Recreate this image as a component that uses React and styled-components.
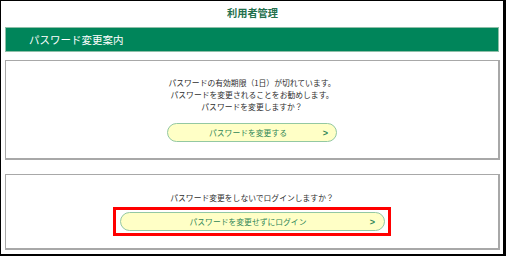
import React from "react";
import styled, { createGlobalStyle } from "styled-components";

const Global = createGlobalStyle`
  html, body { margin: 0; padding: 0; background: #fff; }
  body { font-family: "Noto Sans CJK JP", "Noto Sans", sans-serif; }
  * { box-sizing: border-box; }
`;

const Frame = styled.div`
  width: 506px;
  height: 256px;
  border-style: solid;
  border-color: #000;
  border-width: 1px 3px 2px 1px;
  padding: 0 3px 0 4px;
  display: flex;
  flex-direction: column;
  background: #fff;
`;

const Title = styled.div`
  height: 26px;
  display: flex;
  align-items: center;
  justify-content: center;
  font-size: 10.2px;
  font-weight: bold;
  color: #23704c;
  padding-bottom: 4px;
`;

const Bar = styled.div`
  height: 25px;
  margin-right: 1px;
  background: #00855a;
  border: 1px solid #8fbfa8;
  display: flex;
  align-items: center;
  padding-left: 23px;
  color: #fff;
  font-size: 10.5px;
  padding-bottom: 1px;
`;

const Box = styled.div`
  margin-top: ${(p) => p.$gap}px;
  height: ${(p) => p.$h}px;
  border-style: solid;
  border-color: #a8a8a8;
  border-width: 1px 2px 2px 1px;
  display: flex;
  flex-direction: column;
  align-items: center;
  padding-top: ${(p) => p.$pt}px;
`;

const Message = styled.p`
  margin: 0;
  font-size: 7.8px;
  line-height: 12px;
  color: #2e2e2e;
  text-align: center;
`;

const Highlight = styled.div`
  margin-top: 3px;
  border: 3px solid #f00;
  padding: 2px 3px 2px 4px;
`;

const Button = styled.div`
  margin-top: ${(p) => p.$mt || 0}px;
  width: ${(p) => p.$w}px;
  height: 19px;
  border-radius: 10px;
  background: #ffffc6;
  border: 1px solid #93c8a2;
  display: grid;
  grid-template-columns: 1fr auto 1fr;
  align-items: center;
  color: #2f8656;
  font-size: 7.8px;
  padding-right: ${(p) => p.$pr}px;
`;

const Label = styled.span`
  grid-column: 2;
`;

const Arrow = styled.span`
  grid-column: 3;
  justify-self: end;
  font-family: "Liberation Sans", sans-serif;
  font-weight: bold;
  font-size: 9px;
  color: #2f8656;
`;

export default function App() {
  return (
    <>
      <Global />
      <Frame>
        <Title>利用者管理</Title>
        <Bar>パスワード変更案内</Bar>
        <Box $gap={8} $h={100} $pt={16}>
          <Message>
            パスワードの有効期限（1日）が切れています。
            <br />
            パスワードを変更されることをお勧めします。
            <br />
            パスワードを変更しますか？
          </Message>
          <Button $w={170} $mt={10} $pr={8}>
            <Label>パスワードを変更する</Label>
            <Arrow>&gt;</Arrow>
          </Button>
        </Box>
        <Box $gap={14} $h={76} $pt={17}>
          <Message>パスワード変更をしないでログインしますか？</Message>
          <Highlight>
            <Button $w={265} $pr={9}>
              <Label>パスワードを変更せずにログイン</Label>
              <Arrow>&gt;</Arrow>
            </Button>
          </Highlight>
        </Box>
      </Frame>
    </>
  );
}
